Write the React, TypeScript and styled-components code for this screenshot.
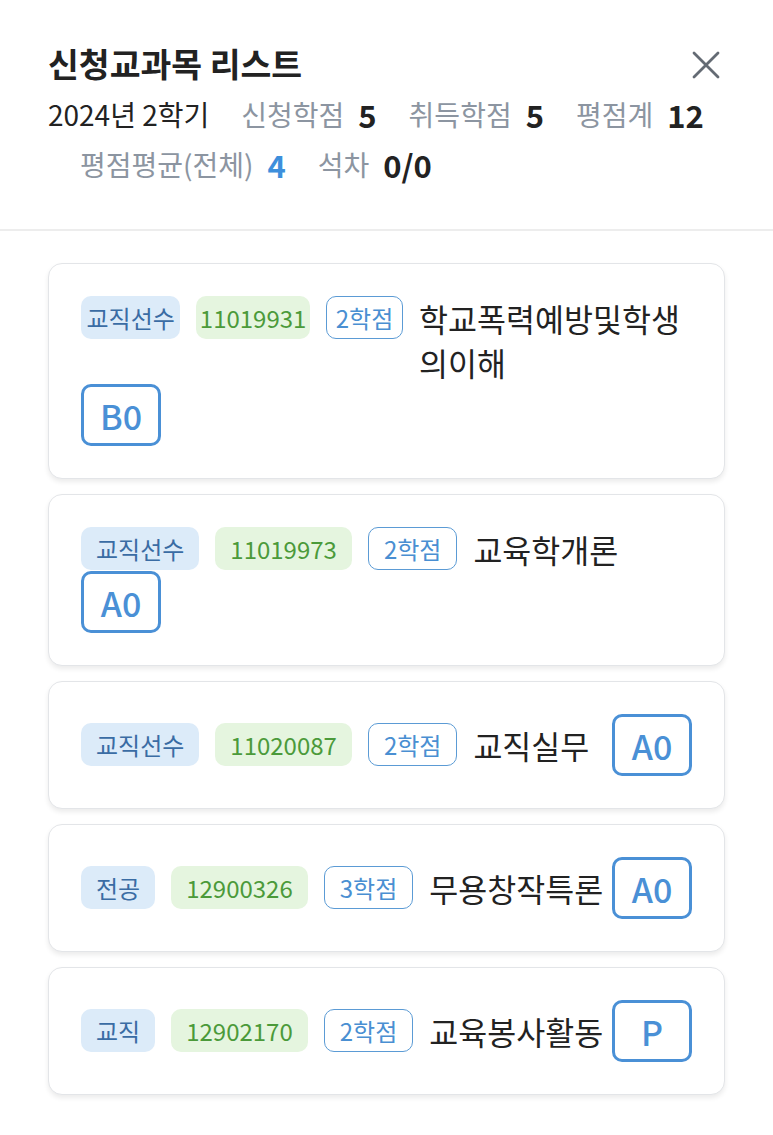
import React from "react";
import styled, { createGlobalStyle } from "styled-components";

const GlobalStyle = createGlobalStyle`
  html, body { margin: 0; padding: 0; background: #ffffff; }
  body {
    font-family: "Noto Sans CJK KR", "Noto Sans", sans-serif;
    color: #222222;
  }
  * { box-sizing: border-box; }
`;

const Page = styled.div`
  width: 773px;
  background: #ffffff;
`;

const Header = styled.header`
  padding: 40px 48px 40px;
  border-bottom: 2px solid #ededed;
`;

const TitleRow = styled.div`
  display: flex;
  align-items: center;
  justify-content: space-between;
`;

const Title = styled.h1`
  margin: 0;
  font-size: 33.5px;
  font-weight: 700;
  line-height: 46px;
  color: #222222;
`;

const CloseButton = styled.button`
  display: flex;
  align-items: center;
  justify-content: center;
  padding: 0;
  margin: 4px 5px 0 0;
  border: none;
  background: transparent;
  cursor: pointer;
`;

const Stats = styled.div`
  display: flex;
  flex-wrap: wrap;
  align-items: center;
  margin-top: 3px;
`;

const Stat = styled.div`
  display: flex;
  align-items: center;
  height: 50px;
  & + & { margin-left: 32px; }
`;

const Term = styled.span`
  font-size: 28px;
  color: #222222;
`;

const StatLabel = styled.span`
  font-size: 28px;
  color: #8c95a1;
`;

const StatValue = styled.span<{ $accent?: boolean }>`
  margin-left: 14px;
  font-size: 31px;
  font-weight: 700;
  color: ${(p) => (p.$accent ? "#3d8fdc" : "#222222")};
`;

const List = styled.div`
  display: flex;
  flex-direction: column;
  gap: 15px;
  padding: 32px 48px 30px;
`;

const Card = styled.div<{ $stacked: boolean }>`
  display: flex;
  flex-direction: ${(p) => (p.$stacked ? "column" : "row")};
  align-items: ${(p) => (p.$stacked ? "flex-start" : "center")};
  padding: 32px;
  border: 1px solid #e3e5e8;
  border-radius: 14px;
  background: #ffffff;
  box-shadow: 0 3px 5px rgba(0, 0, 0, 0.08);
`;

const Row = styled.div`
  display: flex;
  align-items: flex-start;
  gap: 16px;
  flex: 0 1 auto;
  min-width: 0;
  max-width: 100%;
`;

const Tag = styled.span<{ $tone: "type" | "code" }>`
  display: flex;
  align-items: center;
  justify-content: center;
  flex: 0 1 auto;
  min-width: 0;
  height: 43px;
  padding: 0 15px;
  border-radius: 10px;
  font-size: 24px;
  white-space: nowrap;
  background: ${(p) => (p.$tone === "type" ? "#dcebf9" : "#e5f5df")};
  color: ${(p) => (p.$tone === "type" ? "#3a6ca4" : "#4b9a3a")};
`;

const Credit = styled.span`
  display: flex;
  align-items: center;
  justify-content: center;
  flex: 0 1 auto;
  min-width: 0;
  height: 43px;
  padding: 0 15px;
  border: 1.5px solid #5b9bd5;
  border-radius: 10px;
  font-size: 24px;
  white-space: nowrap;
  background: #ffffff;
  color: #4a8fd2;
`;

const CourseName = styled.span`
  flex: 0 1 auto;
  min-width: 0;
  font-size: 31.5px;
  line-height: 44px;
  color: #222222;
`;

const Grade = styled.span`
  display: flex;
  align-items: center;
  justify-content: center;
  flex: none;
  width: 80px;
  height: 62px;
  margin-left: auto;
  border: 3px solid #4a90d6;
  border-radius: 10px;
  font-size: 34px;
  font-weight: 500;
  color: #4a90d6;
`;

const StackedGrade = styled(Grade)`
  margin-left: 0;
`;

type Course = {
  type: string;
  code: string;
  credit: number;
  name: string;
  grade: string;
  stacked: boolean;
};

const courses: Course[] = [
  { type: "교직선수", code: "11019931", credit: 2, name: "학교폭력예방및학생의이해", grade: "B0", stacked: true },
  { type: "교직선수", code: "11019973", credit: 2, name: "교육학개론", grade: "A0", stacked: true },
  { type: "교직선수", code: "11020087", credit: 2, name: "교직실무", grade: "A0", stacked: false },
  { type: "전공", code: "12900326", credit: 3, name: "무용창작특론", grade: "A0", stacked: false },
  { type: "교직", code: "12902170", credit: 2, name: "교육봉사활동", grade: "P", stacked: false },
];

const CloseIcon = () => (
  <svg width="28" height="28" viewBox="0 0 28 28" fill="none">
    <path d="M2 2 L26 26 M26 2 L2 26" stroke="#646b74" strokeWidth="2.8" strokeLinecap="round" />
  </svg>
);

export default function App() {
  return (
    <Page>
      <GlobalStyle />
      <Header>
        <TitleRow>
          <Title>신청교과목 리스트</Title>
          <CloseButton aria-label="닫기">
            <CloseIcon />
          </CloseButton>
        </TitleRow>
        <Stats>
          <Stat>
            <Term>2024년 2학기</Term>
          </Stat>
          <Stat>
            <StatLabel>신청학점</StatLabel>
            <StatValue>5</StatValue>
          </Stat>
          <Stat>
            <StatLabel>취득학점</StatLabel>
            <StatValue>5</StatValue>
          </Stat>
          <Stat>
            <StatLabel>평점계</StatLabel>
            <StatValue>12</StatValue>
          </Stat>
          <Stat>
            <StatLabel>평점평균(전체)</StatLabel>
            <StatValue $accent>4</StatValue>
          </Stat>
          <Stat>
            <StatLabel>석차</StatLabel>
            <StatValue>0/0</StatValue>
          </Stat>
        </Stats>
      </Header>
      <List>
        {courses.map((c) => (
          <Card key={c.code} $stacked={c.stacked}>
            <Row>
              <Tag $tone="type">{c.type}</Tag>
              <Tag $tone="code">{c.code}</Tag>
              <Credit>{c.credit}학점</Credit>
              <CourseName>{c.name}</CourseName>
            </Row>
            {c.stacked ? <StackedGrade>{c.grade}</StackedGrade> : <Grade>{c.grade}</Grade>}
          </Card>
        ))}
      </List>
    </Page>
  );
}
